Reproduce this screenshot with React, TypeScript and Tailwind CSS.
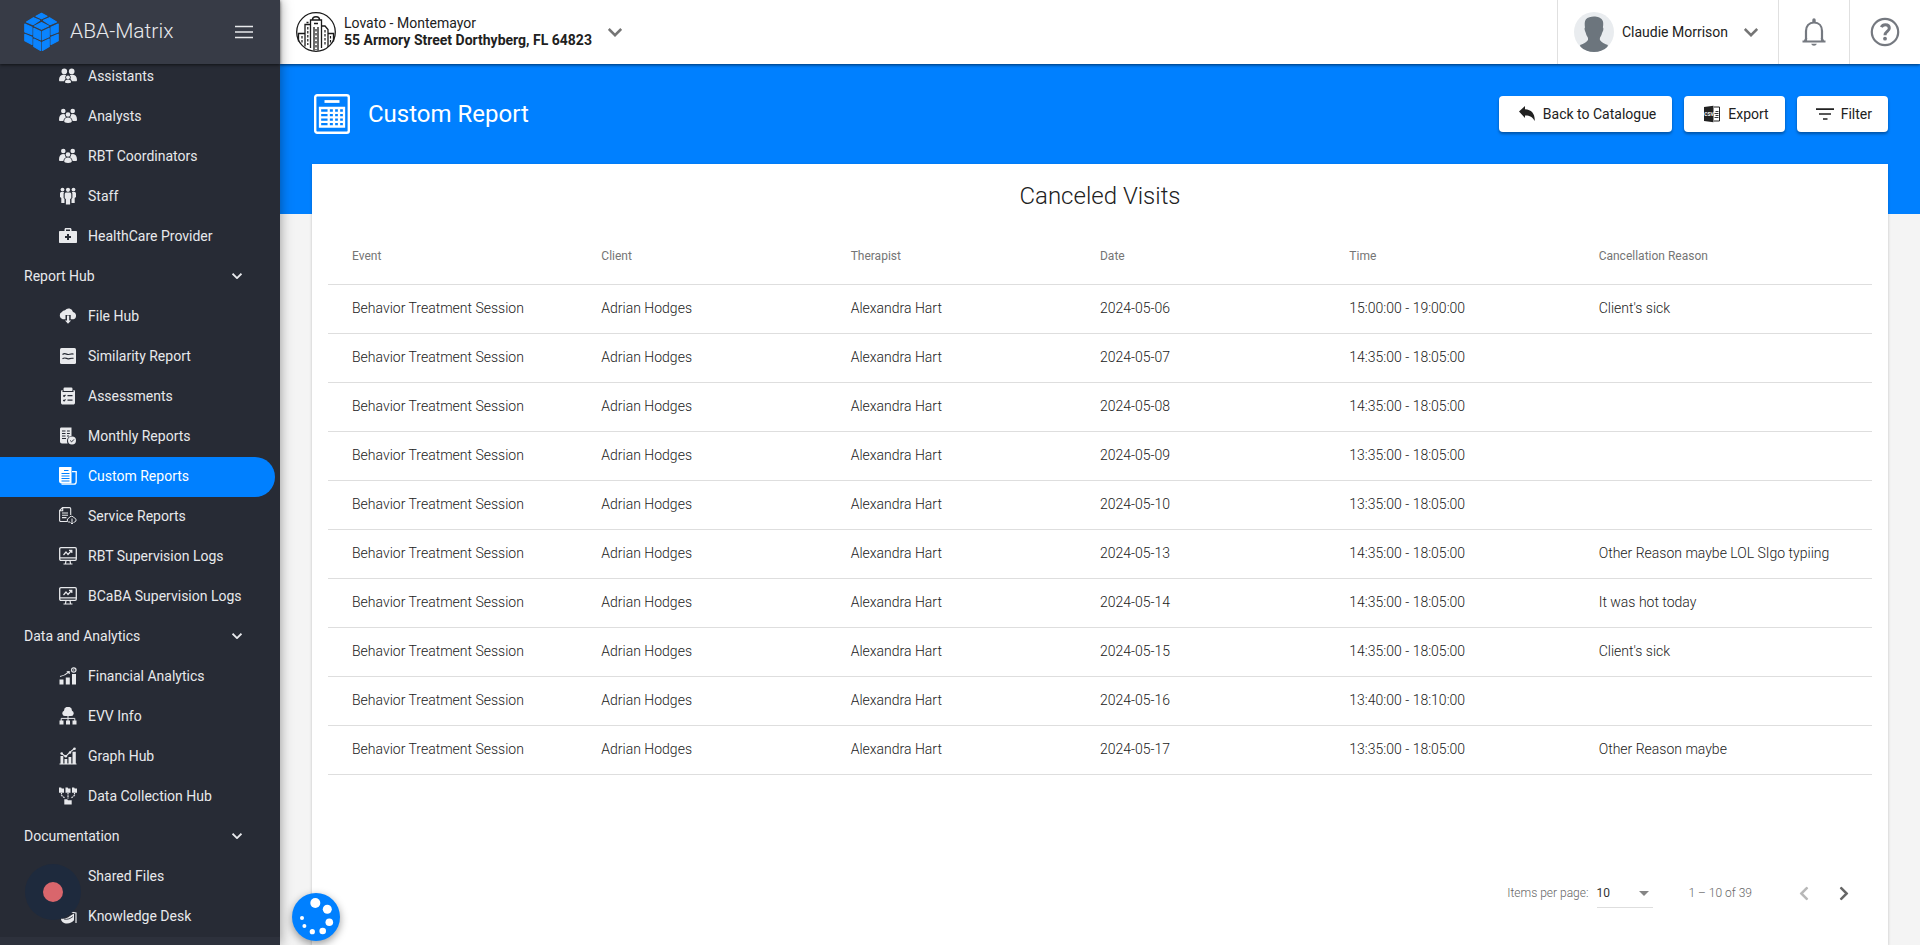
import type { ReactNode } from 'react';
import clsx from 'clsx';

interface NavItem {
    label: string;
    icon: ReactNode;
    active?: boolean;
}

interface NavGroup {
    title?: string;
    items: NavItem[];
}

interface Visit {
    date: string;
    time: string;
    reason?: string;
}

const NavIcon = ({ children }: { children?: ReactNode }) => (
    <svg viewBox="0 0 18 18" className="size-[18px] shrink-0" fill="currentColor" aria-hidden="true">
        {children}
    </svg>
);

const AssistantsIcon = (
    <NavIcon>
        <circle cx="5.3" cy="4.4" r="2.8" />
        <circle cx="12.7" cy="4.4" r="2.8" />
        <path d="M0 13c0-3.4 1.8-5.2 5-5.2 1 0 1.6.2 2.2.5A3 3 0 0 0 6.6 12c-.8.5-1.3 1.2-1.5 2.3H.8C.3 14.3 0 13.6 0 13z" />
        <path d="M18 13c0-3.4-1.8-5.2-5-5.2-1 0-1.6.2-2.2.5a3 3 0 0 1 .6 3.7c.8.5 1.3 1.2 1.5 2.3h4.3c.5 0 .8-.7.8-1.3z" />
        <circle cx="9" cy="10.3" r="1.9" />
        <path d="M6 15c0-1.5 1.2-2.5 3-2.5s3 1 3 2.5c0 .8-1 1.2-3 1.2S6 15.8 6 15z" />
    </NavIcon>
);

const TeamIcon = (
    <NavIcon>
        <circle cx="4.3" cy="4" r="2.3" />
        <circle cx="13.7" cy="4" r="2.3" />
        <path d="M0 12.5C0 9 1.5 6.9 4 6.9c1 0 1.7.3 2 .6C6 9 6.5 9.8 7 10.3c-1.5.7-2.4 2-2.6 3.7H.8c-.5 0-.8-.7-.8-1.5z" />
        <path d="M18 12.5c0-3.5-1.5-5.6-4-5.6-1 0-1.7.3-2 .6 0 1.5-.5 2.3-1 2.8 1.5.7 2.4 2 2.6 3.7h3.6c.5 0 .8-.7.8-1.5z" />
        <circle cx="9" cy="7.5" r="2.3" />
        <path d="M5.2 14.3c0-2.3 1.5-3.7 3.8-3.7s3.8 1.4 3.8 3.7c0 1.2-1.4 1.7-3.8 1.7s-3.8-.5-3.8-1.7z" />
    </NavIcon>
);

const StaffIcon = (
    <NavIcon>
        <circle cx="3.5" cy="2.6" r="1.9" />
        <circle cx="14.5" cy="2.6" r="1.9" />
        <circle cx="9" cy="2.8" r="2.1" />
        <path d="M2.6 5h2.6c-.6.8-.6 1.5-.6 2.5V11l.9 1v4H2.3v-5L1 10V6.6C1 5.6 1.6 5 2.6 5z" />
        <path d="M15.4 5h-2.6c.6.8.6 1.5.6 2.5V11l-.9 1v4h3.2v-5l1.3-1V6.6c0-1-.6-1.6-1.6-1.6z" />
        <path d="M7.4 5.5h3.2c1 0 1.7.7 1.7 1.7v4l-1.2.8v5.5H6.9V12l-1.2-.8v-4c0-1 .7-1.7 1.7-1.7z" />
    </NavIcon>
);

const KitIcon = (
    <NavIcon>
        <path d="M5.5 4V2.5C5.5 1.6 6 1 7 1h4c1 0 1.5.6 1.5 1.5V4H11V2.5H7V4z" />
        <path fillRule="evenodd" d="M1 4h16c.6 0 1 .4 1 1v10c0 .6-.4 1-1 1H1c-.6 0-1-.4-1-1V5c0-.6.4-1 1-1zm7 3v2H6v2h2v2h2v-2h2V9h-2V7z" />
    </NavIcon>
);

const CloudIcon = (
    <NavIcon>
        <path d="M3.8 12.3A3.9 3.9 0 0 1 2.9 5 3.6 3.6 0 0 1 6 3.2 4.5 4.5 0 0 1 14 5a3.8 3.8 0 0 1 .5 7.3h-2.8V8H6.5v4.3z" />
        <path d="M8 8.5h2.2v5h1.9L9 16.8l-3-3.3h2z" />
    </NavIcon>
);

const SimilarityIcon = (
    <NavIcon>
        <rect x="1" y="1" width="16" height="16" rx="1.5" />
        <path d="M3.5 7.5c2.5-2 4 0 5.5 0s3-.9 5.5-.4M3.5 11.8c2.5-2 4 0 5.5 0s3-.9 5.5-.4" stroke="#272b35" strokeWidth="1.2" fill="none" />
    </NavIcon>
);

const AssessmentsIcon = (
    <NavIcon>
        <rect x="4.5" y="0.5" width="9" height="3.6" rx="1.2" />
        <path d="M3.5 3v2h11V3c1 0 1.5.7 1.5 1.7v11c0 1-.7 1.8-1.8 1.8H3.8c-1.1 0-1.8-.8-1.8-1.8v-11C2 3.7 2.5 3 3.5 3z" />
        <path d="M4.3 8.5l.8.8 1.4-1.5M4.3 13l.8.8 1.4-1.5M8.5 8.7h5M8.5 13.2h5" stroke="#272b35" strokeWidth="1.2" fill="none" />
    </NavIcon>
);

const MonthlyIcon = (
    <NavIcon>
        <path d="M2 .5h10.5V9c-2.7.3-4.5 2.2-4.500 5 0 .9.2 1.7.6 2.5H3c-1.2 0-2-.8-2-2v-12c0-1.2.3-2 1-2z" />
        <path d="M3 4h3.5M8 4h2.8M3 6.5h3.5M8 6.5h2.8M3 9h3.5M8 9h2M3 11.5h4" stroke="#272b35" strokeWidth="1" />
        <circle cx="13" cy="13.5" r="4" />
        <path d="M11.2 13.5l1.4 1.4 2.4-2.5" stroke="#272b35" strokeWidth="1" fill="none" />
    </NavIcon>
);

const CustomIcon = (
    <NavIcon>
        <path d="M1 0h11.5v16.5H2.5C1 16.5 0 15.5 0 14V1c0-.6.4-1 1-1z" />
        <path d="M13 4.7h4.2v9.8c0 1.7-.8 2.7-2.2 2.7H2.5" stroke="currentColor" strokeWidth="1.3" fill="none" />
        <path d="M5 3.5h4.5M2.5 6.5h8M2.5 9h8M2.5 11.5h8M2.5 14h8" stroke="#0080ff" strokeWidth="1.1" />
    </NavIcon>
);

const ServiceIcon = (
    <NavIcon>
        <path d="M8.5 14.5H1.7C1 14.5.6 14 .6 13.3V3.5L3.5.6h7c.7 0 1.2.5 1.2 1.2V8M3.7.8v3H.8M3 6h6M3 8.3h6M3 10.6h4.5" stroke="currentColor" strokeWidth="1.1" fill="none" />
        <path d="M11 15H9.5a2 2 0 0 1 .3-3.8 3 3 0 0 1 5.5-.2 2.1 2.1 0 0 1 .5 4H15M13 11.5v5.5M11.5 15.5L13 17l1.5-1.5" stroke="currentColor" strokeWidth="1" fill="none" />
    </NavIcon>
);

const MonitorIcon = (
    <NavIcon>
        <rect x="0.7" y="0.7" width="16.6" height="12.6" rx="1.2" stroke="currentColor" strokeWidth="1.3" fill="none" />
        <path d="M1 10.8h16M7 13.5l-.5 3M11 13.5l.5 3M4.5 17h9M4.5 8l2.5-3 2 2.5 3.5-4M10 3.3h2.8v2.7" stroke="currentColor" strokeWidth="1.2" fill="none" />
    </NavIcon>
);

const FinancialIcon = (
    <NavIcon>
        <path d="M.5 12.5h4v5h-4zM6.8 10.5h4v7h-4zM13 7h4v10.5h-4z" />
        <path d="M1 9.5c3-.5 6-2 9-4.7M7.7 4.7l2.5-.2v2.5" stroke="currentColor" strokeWidth="1.1" fill="none" />
        <circle cx="14.8" cy="3" r="2.2" stroke="currentColor" strokeWidth="1.2" fill="none" />
        <circle cx="14.8" cy="3" r="0.7" />
    </NavIcon>
);

const EvvIcon = (
    <NavIcon>
        <path d="M5.8 9A2.7 2.7 0 0 1 5 3.8a4 4 0 0 1 8 0A2.7 2.7 0 0 1 12.2 9z" />
        <path d="M9 8.5V14M2.2 14v-2.6h13.6V14" stroke="currentColor" strokeWidth="1" fill="none" />
        <path d="M.5 13.5h4v4h-4zM7 13.5h4v4H7zM13.5 13.5h4v4h-4z" />
    </NavIcon>
);

const GraphIcon = (
    <NavIcon>
        <path d="M1.5 9h2.8v7.5H1.5zM5.5 12h2.8v4.5H5.5zM9.5 10h2.8v6.5H9.5zM13.5 4.8h3.3v11.7h-3.3zM.5 16.5h17v1H.5z" />
        <path d="M2.5 6.5l4.2 3 4.6-4.7L15.5 1.5" stroke="currentColor" strokeWidth="1.1" fill="none" />
        <circle cx="2.7" cy="6.5" r="1.3" />
        <circle cx="6.8" cy="9.3" r="1.3" />
        <circle cx="11" cy="5.5" r="1.2" />
        <circle cx="15.5" cy="1.7" r="1.3" />
    </NavIcon>
);

const CollectionIcon = (
    <NavIcon>
        <path d="M0 .5h2.2l.5 1H5v4.3H0zM6.5.5h2.2l.5 1h2.3v4.3h-5zM13 .5h2.2l.5 1H18v4.3h-5z" />
        <path d="M2.5 6v2.5L6 11M15.5 6v2.5L12 11M9 6v5.5" stroke="currentColor" strokeWidth="1.2" strokeDasharray="1.6 .7" fill="none" />
        <path d="M5.3 12.3h3l.6 1h3.8v4.2H5.3z" />
    </NavIcon>
);

const KnowledgeIcon = (
    <NavIcon>
        <path d="M2 11.5c3 .8 6-.2 9-2.5l4-2.5v6.8c-1.5 2-4 3.2-7 3.2-3.2 0-6-1.5-6-5z" />
        <path d="M5 12c3.5 1 6.5-.5 9-2.5" stroke="#272b35" strokeWidth="0.8" fill="none" />
        <path d="M12 5l5 1V16" stroke="currentColor" strokeWidth="1.2" fill="none" />
    </NavIcon>
);

const navigation: NavGroup[] = [
    {
        items: [
            { label: 'Assistants', icon: AssistantsIcon },
            { label: 'Analysts', icon: TeamIcon },
            { label: 'RBT Coordinators', icon: TeamIcon },
            { label: 'Staff', icon: StaffIcon },
            { label: 'HealthCare Provider', icon: KitIcon },
        ],
    },
    {
        title: 'Report Hub',
        items: [
            { label: 'File Hub', icon: CloudIcon },
            { label: 'Similarity Report', icon: SimilarityIcon },
            { label: 'Assessments', icon: AssessmentsIcon },
            { label: 'Monthly Reports', icon: MonthlyIcon },
            { label: 'Custom Reports', icon: CustomIcon, active: true },
            { label: 'Service Reports', icon: ServiceIcon },
            { label: 'RBT Supervision Logs', icon: MonitorIcon },
            { label: 'BCaBA Supervision Logs', icon: MonitorIcon },
        ],
    },
    {
        title: 'Data and Analytics',
        items: [
            { label: 'Financial Analytics', icon: FinancialIcon },
            { label: 'EVV Info', icon: EvvIcon },
            { label: 'Graph Hub', icon: GraphIcon },
            { label: 'Data Collection Hub', icon: CollectionIcon },
        ],
    },
    {
        title: 'Documentation',
        items: [
            { label: 'Shared Files', icon: <NavIcon /> },
            { label: 'Knowledge Desk', icon: KnowledgeIcon },
        ],
    },
];

const columns = ['Event', 'Client', 'Therapist', 'Date', 'Time', 'Cancellation Reason'];

const visits: Visit[] = [
    { date: '2024-05-06', time: '15:00:00 - 19:00:00', reason: "Client's sick" },
    { date: '2024-05-07', time: '14:35:00 - 18:05:00' },
    { date: '2024-05-08', time: '14:35:00 - 18:05:00' },
    { date: '2024-05-09', time: '13:35:00 - 18:05:00' },
    { date: '2024-05-10', time: '13:35:00 - 18:05:00' },
    { date: '2024-05-13', time: '14:35:00 - 18:05:00', reason: 'Other Reason maybe LOL SIgo typiing' },
    { date: '2024-05-14', time: '14:35:00 - 18:05:00', reason: 'It was hot today' },
    { date: '2024-05-15', time: '14:35:00 - 18:05:00', reason: "Client's sick" },
    { date: '2024-05-16', time: '13:40:00 - 18:10:00' },
    { date: '2024-05-17', time: '13:35:00 - 18:05:00', reason: 'Other Reason maybe' },
];

const CubeLogo = () => (
    <svg viewBox="0 0 36 40" className="h-10 w-9 shrink-0" fill="#0a84ff" stroke="#0a84ff" strokeWidth="1.2" strokeLinejoin="round" aria-hidden="true">
        {/* back layer */}
        <path d="M12 4.2L17.5 1.3l5.5 2.9-5.5 2.6z" />
        <path d="M2.5 10l7-4.3 6 2.7-6.5 4.3z" />
        <path d="M19.5 8.4l6-2.7 7 4.3-6.5 2.7z" />
        <path d="M.8 12l7.2 3.2v7.5L.8 20z" />
        <path d="M34.2 12L27 15.2v7.5l7.2-2.7z" />
        <path d="M.8 22.3L8 25.3v7.2L.8 28.8z" />
        <path d="M34.2 22.3L27 25.3v7.2l7.2-3.7z" />
        {/* front layer */}
        <path d="M10.5 14l7-3.5 7 3.5-7 3.3z" />
        <path d="M9.8 16.3l6.8 3.2v8.3l-6.8-3.2z" />
        <path d="M25.2 16.3l-6.8 3.2v8.3l6.8-3.2z" />
        <path d="M9.8 27l6.8 3.2v8.2l-6.8-4z" />
        <path d="M25.2 27l-6.8 3.2v8.2l6.8-4z" />
    </svg>
);

const Chevron = ({ className }: { className?: string }) => (
    <svg viewBox="0 0 14 9" className={className} fill="none" stroke="currentColor" strokeWidth="2.5" aria-hidden="true">
        <path d="M.8 1L7 7.2 13.2 1" />
    </svg>
);

const CityIcon = () => (
    <svg viewBox="0 0 40 40" className="size-10" fill="none" stroke="#1a1a1a" strokeWidth="1.3" aria-hidden="true">
        <circle cx="20" cy="20" r="19.3" />
        <path d="M2.5 29.5V21.5H9M37.5 29.5V21.5H32M9 34.5V12.5h5M14.5 36V8h11v28M26 14h3l3 3.5V35M18 38.5V15M22 38.5V15" />
        <path d="M16.5 8c0-2 1.5-3.2 3.5-3.2S23.5 6 23.5 8M18 11.5h4M10.5 10.5h2" strokeWidth="1.6" />
        <path d="M11.8 15v18M29 18v16M20 17v21M6 24v8M34.5 24v8" strokeDasharray="2.5 1.5" strokeWidth="1.2" />
    </svg>
);

const Avatar = () => (
    <svg viewBox="0 0 40 40" className="size-10 rounded-full" aria-hidden="true">
        <rect width="40" height="40" fill="#e9ecef" />
        <path d="M20 4.5c3 0 8 1 9 5 .4 2 .2 4.5-.1 6 .8.5.6 3-.4 4.5-.8 1.3-.8 3-1.7 4.3-.9 1.2-1 2-.9 3.700 2.500 3.200 5 3.800 8 5l-2 7.500H8l-2-7.500c3-1.200 5.500-1.800 8-5 .1-1.700 0-2.500-.9-3.700-.9-1.300-1-3-1.700-4.300-.9-1.500-1.200-4-.4-4.500-.5-3-.5-6.500 1-8.300C13.500 5.300 17 4.500 20 4.500z" fill="#6c757d" />
    </svg>
);

const Sidebar = () => (
    <aside className="relative z-20 flex w-[280px] shrink-0 flex-col bg-[#272b35] text-[#e8e9ec] shadow-[0_0_12px_rgba(0,0,0,0.4)]">
        <div className="z-10 flex h-16 shrink-0 items-center bg-[#373b46] pr-6 pl-6 shadow-[0_1px_3px_rgba(0,0,0,0.6)]">
            <CubeLogo />
            <span className="ml-2.5 text-[21px] font-light">ABA-Matrix</span>
            <button type="button" aria-label="Toggle navigation" className="ml-auto flex size-6 items-center justify-center">
                <svg viewBox="0 0 18 14" className="h-3.5 w-[18px]" stroke="currentColor" strokeWidth="1.3" aria-hidden="true">
                    <path d="M0 1.5h18M0 7h18M0 12.5h18" />
                </svg>
            </button>
        </div>
        <nav className="min-h-0 flex-1 overflow-hidden">
            <div className="-mt-[7px]">
                {navigation.map((group, i) => (
                    <div key={group.title ?? i}>
                        {group.title && (
                            <button type="button" className="flex h-10 w-full items-center justify-between pr-[38px] pb-0.5 pl-6 text-sm">
                                {group.title}
                                <Chevron className="w-2.5" />
                            </button>
                        )}
                        <ul>
                            {group.items.map((item) => (
                                <li key={item.label} className="pr-[5px]">
                                    <a
                                        href="#"
                                        className={clsx(
                                            'flex h-10 items-center gap-[11px] rounded-r-full pb-0.5 pl-[59px] text-sm',
                                            item.active && 'bg-[#0080ff] text-white',
                                        )}
                                    >
                                        {item.icon}
                                        {item.label}
                                    </a>
                                </li>
                            ))}
                        </ul>
                    </div>
                ))}
            </div>
        </nav>
        <div className="h-2 shrink-0 bg-[#2d313c]" />
        <button type="button" aria-label="Record" className="absolute bottom-[25px] left-[25px] flex size-14 items-center justify-center rounded-full bg-[#1e2a3d]">
            <span className="size-5 rounded-full bg-[#d9666c]" />
        </button>
    </aside>
);

const TopBar = () => (
    <header className="relative z-10 flex h-16 shrink-0 items-center bg-white pl-4 text-[#212121] shadow-[0_1px_3px_rgba(0,0,0,0.6)]">
        <button type="button" className="flex items-center gap-2 text-left">
            <CityIcon />
            <span className="text-sm leading-[17px]">
                <span className="block">Lovato - Montemayor</span>
                <span className="block font-bold">55 Armory Street Dorthyberg, FL 64823</span>
            </span>
            <Chevron className="ml-2 w-3.5 text-[#757575]" />
        </button>
        <button type="button" className="ml-auto flex h-full items-center gap-2 border-l border-[#e0e0e0] pr-5 pl-4 text-sm">
            <Avatar />
            Claudie Morrison
            <Chevron className="ml-2 w-3.5 text-[#757575]" />
        </button>
        <button type="button" aria-label="Notifications" className="flex h-full w-[71px] items-center justify-center border-l border-[#e0e0e0] text-[#757980]">
            <svg viewBox="0 0 24 28" className="h-7 w-6" fill="none" stroke="currentColor" strokeWidth="2.2" aria-hidden="true">
                <path d="M4 23.5V13c0-5 3-8.5 8-8.5s8 3.5 8 8.5v10.5" />
                <path d="M.5 23.5h23M2.5 23.5L4.5 20M21.5 23.5L19.5 20" strokeWidth="2" />
                <path d="M10.3 4V2a1.7 1.7 0 0 1 3.4 0v2z" fill="currentColor" stroke="none" />
                <path d="M9.2 25.8h5.6c-.4 1.3-1.4 2-2.8 2s-2.400-.7-2.800-2z" fill="currentColor" stroke="none" />
            </svg>
        </button>
        <button type="button" aria-label="Help" className="flex h-full w-[71px] items-center justify-center border-l border-[#e0e0e0] text-[#757980]">
            <svg viewBox="0 0 30 30" className="size-[30px]" fill="none" stroke="currentColor" aria-hidden="true">
                <circle cx="15" cy="15" r="13.2" strokeWidth="2.2" />
                <path d="M11.3 10.2c.8-1.7 2.2-2.5 4-2.5 2.3 0 4 1.3 4 3.5 0 3.2-4.3 3.3-4.3 7" strokeWidth="3" />
                <circle cx="15" cy="21.7" r="1.9" fill="currentColor" stroke="none" />
            </svg>
        </button>
    </header>
);

const ActionButton = ({ icon, label }: { icon: ReactNode; label: string }) => (
    <button type="button" className="flex h-9 items-center gap-1 rounded bg-white px-4 text-sm text-[#212121] shadow-[0_2px_3px_rgba(0,0,0,0.35)]">
        <svg viewBox="0 0 24 24" className="size-6" fill="currentColor" aria-hidden="true">
            {icon}
        </svg>
        {label}
    </button>
);

const BackIcon = <path d="M4 9.5L10 4v3.2c6.5.3 10 4.5 9.8 11.8-2.3-4-5-5.600-9.800-5.500V16z" />;

const ExportIcon = (
    <>
        <path d="M14 5h5.5v14H14" fill="none" stroke="currentColor" strokeWidth="1" />
        <path d="M15.5 9.5h3M14.5 11.5h4M15.5 13.5h3M14.5 15.5h4" fill="none" stroke="currentColor" strokeWidth=".9" />
        <path d="M4 5l9.5-1.2v16.4L4 19z" />
        <text x="4.2" y="14" fontSize="5" fontWeight="700" fill="#fff">CSV</text>
    </>
);

const FilterIcon = <path d="M3 6.3h18v1.6H3zM6 11.2h12v1.6H6zM10 16.2h4.5v1.6H10z" />;

const VisitsTable = () => (
    <table className="block text-sm text-[#212121]">
        <thead className="block">
            <tr className="grid grid-cols-6 border-b border-[#dedede] px-6">
                {columns.map((column) => (
                    <th key={column} className="flex h-14 items-center text-left text-xs font-normal text-[#757575]">
                        {column}
                    </th>
                ))}
            </tr>
        </thead>
        <tbody className="block">
            {visits.map((visit) => (
                <tr key={visit.date} className="grid grid-cols-6 border-b border-[#dedede] px-6">
                    {['Behavior Treatment Session', 'Adrian Hodges', 'Alexandra Hart', visit.date, visit.time, visit.reason].map((value, i) => (
                        <td key={columns[i]} className="flex h-12 items-center pb-0.5 font-light whitespace-nowrap">
                            {value}
                        </td>
                    ))}
                </tr>
            ))}
        </tbody>
    </table>
);

const Paginator = () => (
    <div className="mt-auto mb-6 flex h-14 items-center justify-end px-2 text-xs font-light text-[#666]">
        <label htmlFor="page-size">Items per page:</label>
        <div className="relative ml-2 border-b border-[#dedede]">
            <select id="page-size" defaultValue="10" className="h-7 w-14 appearance-none bg-transparent text-xs font-normal text-[#333]">
                <option>10</option>
                <option>20</option>
                <option>50</option>
            </select>
            <svg viewBox="0 0 10 5" className="pointer-events-none absolute top-3 right-1 w-2.5" fill="#858585" aria-hidden="true">
                <path d="M0 0h10L5 5z" />
            </svg>
        </div>
        <span className="mx-8 pl-1">1 – 10 of 39</span>
        <button type="button" aria-label="Previous page" disabled className="flex size-10 items-center justify-center text-[#b8b8b8]">
            <Chevron className="w-3.5 rotate-90" />
        </button>
        <button type="button" aria-label="Next page" className="flex size-10 items-center justify-center text-[#666]">
            <Chevron className="w-3.5 -rotate-90" />
        </button>
    </div>
);

export default function App() {
    return (
        <div className="flex h-screen overflow-hidden bg-[#f4f4f4] font-[Roboto,sans-serif]">
            <Sidebar />
            <div className="flex min-w-0 flex-1 flex-col">
                <TopBar />
                <main className="flex min-h-0 flex-1 flex-col">
                    <div className="h-[150px] shrink-0 bg-[#0080ff] px-8">
                        <div className="flex h-[100px] items-center gap-3">
                            <svg viewBox="0 0 40 40" className="size-10" fill="none" stroke="#fff" aria-hidden="true">
                                <rect x="3.2" y="1.2" width="33.6" height="37.6" rx="2" strokeWidth="2.4" />
                                <path d="M12.5 7.5h15" strokeWidth="2.8" />
                                <path d="M8 14h24v18.5H8zM8 18.8h24M8 23.3h24M8 27.9h24M16.7 14v18.5M22 14v18.5M27 14v18.5" strokeWidth="2.3" />
                            </svg>
                            <h1 className="ml-1 text-2xl text-white">Custom Report</h1>
                            <div className="ml-auto flex gap-3">
                                <ActionButton icon={BackIcon} label="Back to Catalogue" />
                                <ActionButton icon={ExportIcon} label="Export" />
                                <ActionButton icon={FilterIcon} label="Filter" />
                            </div>
                        </div>
                    </div>
                    <section className="relative mx-8 -mt-[50px] flex flex-1 flex-col bg-white px-4 shadow-[0_1px_3px_rgba(0,0,0,0.2)]">
                        <h2 className="flex h-16 items-center justify-center text-2xl font-light text-[#212121]">Canceled Visits</h2>
                        <VisitsTable />
                        <Paginator />
                    </section>
                </main>
            </div>
            <button type="button" aria-label="Quick actions" className="fixed bottom-1 left-[292px] z-30 size-12 rounded-full bg-[#0080ff] shadow-[0_3px_8px_rgba(0,0,0,0.4)]">
                <svg viewBox="0 0 48 48" fill="#fff" aria-hidden="true">
                    <circle cx="23.3" cy="10" r="5" />
                    <circle cx="35.3" cy="16.3" r="4.5" />
                    <circle cx="37.3" cy="29.3" r="3.8" />
                    <circle cx="30.7" cy="38" r="3.3" />
                    <circle cx="20.3" cy="38.7" r="2.6" />
                    <circle cx="12.4" cy="33" r="2" />
                    <circle cx="10" cy="25" r="2" />
                </svg>
            </button>
        </div>
    );
}
